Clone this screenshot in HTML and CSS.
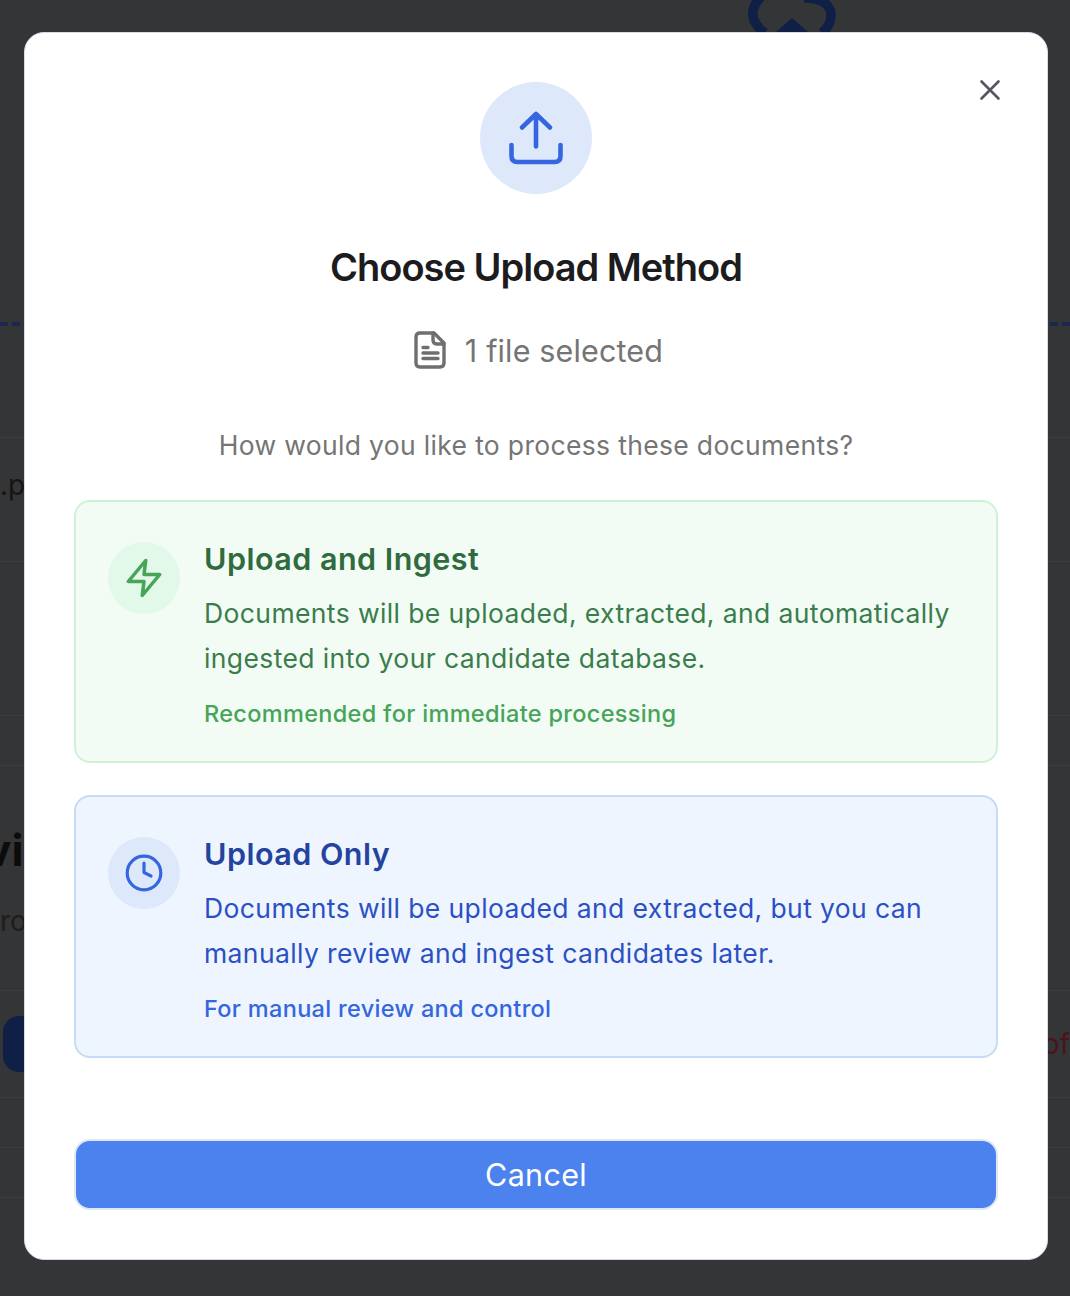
FILE: index.html
```html
<!DOCTYPE html>
<html>
  <head>
    <meta charset="utf-8">
    <title>Choose Upload Method</title>
    <link rel="stylesheet" href="styles.css">
  </head>
  <body>
    <div class="page">
      <div class="band band-top">
        <svg class="cloud" width="88" height="32" viewBox="0 0 88 32">
          <path d="M13 -3C6 4 3 12 6 20C8 25 11 29 17 33M56 -2C74 -3 83 6 83 15C83 23 80 28 74 33" fill="none" stroke="#0f1f45" stroke-width="9.5"/>
          <path d="M44 18L60 32H28Z" fill="#0f1f45"/>
        </svg>
      </div>
      <div class="band band-a"></div>
      <div class="band band-b"><span class="peek-file">.p</span></div>
      <div class="band band-c"></div>
      <div class="band band-d"></div>
      <div class="band band-e">
        <span class="peek-head">vi</span>
        <span class="peek-sub">ro</span>
      </div>
      <div class="band band-f">
        <span class="peek-pill"></span>
        <span class="peek-red">of</span>
      </div>
      <div class="band band-g"></div>
      <div class="band band-d"></div>
    </div>

    <div class="overlay">
      <div class="modal">
        <button class="close-btn">
          <svg width="24" height="24" viewBox="0 0 24 24" fill="none" stroke="#55555f" stroke-width="2.6" stroke-linecap="round">
            <path d="M3.5 3.5L20.5 20.5M20.5 3.5L3.5 20.5"/>
          </svg>
        </button>

        <div class="hero-icon">
          <svg width="56" height="56" viewBox="0 0 56 56" fill="none" stroke="#3566e0" stroke-width="4.6" stroke-linecap="round" stroke-linejoin="round">
            <path d="M28 36.5V4M14 17.5L28 4L42 17.5"/>
            <path d="M3.5 35V46C3.5 50 5.5 52 9.5 52H46.5C50.5 52 52.5 50 52.5 46V35"/>
          </svg>
        </div>

        <h1 class="title">Choose Upload Method</h1>

        <div class="file-count">
          <svg width="32" height="38" viewBox="0 0 32 38" fill="none" stroke="#6f6f6f" stroke-width="3.4" stroke-linecap="round" stroke-linejoin="round">
            <path d="M20 2H6C3.5 2 2 3.5 2 6V32C2 34.5 3.5 36 6 36H26C28.5 36 30 34.5 30 32V12Z"/>
            <path d="M19 2V9C19 11.5 20.5 13 23 13H30"/>
            <path d="M9 16.5H14M9 22H24M9 27.5H24"/>
          </svg>
          <span>1 file selected</span>
        </div>

        <p class="question">How would you like to process these documents?</p>

        <div class="option option-green">
          <div class="option-icon">
            <svg width="42" height="42" viewBox="0 0 24 24" fill="none" stroke="#47a458" stroke-width="2" stroke-linecap="round" stroke-linejoin="round">
              <polygon points="13 2 3 14 12 14 11 22 21 10 12 10 13 2"/>
            </svg>
          </div>
          <div class="option-text">
            <h2>Upload and Ingest</h2>
            <p class="desc">Documents will be uploaded, extracted, and automatically ingested into your candidate database.</p>
            <p class="note">Recommended for immediate processing</p>
          </div>
        </div>

        <div class="option option-blue">
          <div class="option-icon">
            <svg width="40" height="40" viewBox="0 0 40 40" fill="none" stroke="#3566e0" stroke-width="3.2" stroke-linecap="round" stroke-linejoin="round">
              <circle cx="20" cy="20" r="16.8"/>
              <path d="M20 10V19.5L27 23"/>
            </svg>
          </div>
          <div class="option-text">
            <h2>Upload Only</h2>
            <p class="desc">Documents will be uploaded and extracted, but you can manually review and ingest candidates later.</p>
            <p class="note">For manual review and control</p>
          </div>
        </div>

        <button class="cancel-btn">Cancel</button>
      </div>
    </div>
  </body>
</html>
```

FILE: styles.css
```css
* {
  box-sizing: border-box;
}

html, body {
  margin: 0;
  height: 1296px;
  overflow: hidden;
  background: #343536;
}

body {
  position: relative;
  font-family: Inter, "Liberation Sans", sans-serif;
}

/* dimmed page behind the modal */
.band {
  display: flex;
  justify-content: space-between;
  border-bottom: 1px solid #3d3d3e;
}
.band-top {
  height: 326px;
  border-bottom: 4px dashed #1a2850;
  justify-content: flex-end;
  align-items: flex-start;
  padding-right: 234px;
}
.band-a { height: 112px; }
.band-b { height: 124px; align-items: center; }
.band-c { height: 154px; }
.band-d { height: 50px; }
.band-e { height: 225px; display: block; padding-top: 52px; }
.band-f { height: 107px; align-items: center; padding-left: 3px; }
.band-g { height: 50px; }

.peek-file {
  font-size: 28px;
  color: #141414;
  margin-bottom: 30px;
}
.peek-head {
  display: block;
  margin-left: -15px;
  font-size: 44px;
  line-height: 64px;
  font-weight: 700;
  color: #0c0c0c;
}
.peek-sub {
  display: block;
  margin-top: 19px;
  font-size: 28px;
  line-height: 40px;
  color: #1d1d1d;
}
.peek-pill {
  width: 60px;
  height: 56px;
  border-radius: 16px;
  background: #0f1f45;
}
.peek-red {
  font-size: 28px;
  color: #4a1418;
}

/* modal */
.overlay {
  position: absolute;
  top: 0;
  left: 0;
  width: 1070px;
  height: 1296px;
  padding: 32px 22px 36px 24px;
}

.modal {
  position: relative;
  height: 1228px;
  padding: 49px 49px 0;
  display: flex;
  flex-direction: column;
  align-items: center;
  background: #fff;
  border: 1px solid #d6dbe8;
  border-radius: 20px;
}

.close-btn {
  position: absolute;
  top: 45px;
  right: 45px;
  width: 24px;
  height: 24px;
  padding: 0;
  border: 0;
  background: none;
}
.close-btn svg {
  display: block;
}

.hero-icon {
  width: 112px;
  height: 112px;
  border-radius: 50%;
  background: #dee8fb;
  display: flex;
  align-items: center;
  justify-content: center;
}

.title {
  margin: 46px 0 0;
  font-size: 38px;
  line-height: 54px;
  font-weight: 600;
  letter-spacing: -1px;
  color: #1c1c1e;
}

.file-count {
  margin: 35px 0 0 5px;
  height: 42px;
  display: flex;
  align-items: center;
  gap: 19px;
  font-size: 30.5px;
  letter-spacing: 0.15px;
  color: #757575;
}

.question {
  margin: 53px 0 0;
  font-size: 26.5px;
  line-height: 42px;
  letter-spacing: 0.33px;
  color: #757575;
}

.option {
  align-self: stretch;
  height: 263px;
  margin-top: 32px;
  padding: 40px 32px 0;
  display: flex;
  gap: 24px;
  border: 2px solid;
  border-radius: 16px;
}
.question + .option {
  margin-top: 34px;
}
.option-green {
  background: #f2fcf5;
  border-color: #cdf2d8;
}
.option-blue {
  background: #eef5fe;
  border-color: #c5dcf7;
}

.option-icon {
  flex: none;
  width: 72px;
  height: 72px;
  border-radius: 50%;
  display: flex;
  align-items: center;
  justify-content: center;
}
.option-green .option-icon { background: #e2f8e8; }
.option-blue .option-icon { background: #dee8fb; }

.option-text {
  flex: 1;
}
.option-text h2 {
  margin: -5px 0 0;
  font-size: 30.5px;
  line-height: 44px;
  font-weight: 600;
  letter-spacing: 0.48px;
}
.desc {
  margin: 10px 0 0;
  font-size: 26.5px;
  line-height: 45px;
  letter-spacing: 0.39px;
}
.note {
  margin: 11px 0 0;
  font-size: 23.5px;
  line-height: 44px;
  font-weight: 500;
  letter-spacing: 0.32px;
}
.option-green h2 { color: #2f6b3e; }
.option-green .desc { color: #3a7d4c; }
.option-green .note { color: #47a458; }
.option-blue h2 { color: #23439f; }
.option-blue .desc { color: #2b50c4; }
.option-blue .note { color: #3566e0; }

.cancel-btn {
  align-self: stretch;
  height: 71px;
  margin-top: 81px;
  border: 2px solid #dfe7fa;
  border-radius: 16px;
  background: #4b82ed;
  color: #fff;
  font-family: inherit;
  font-size: 30.5px;
  letter-spacing: 0.3px;
}
```
